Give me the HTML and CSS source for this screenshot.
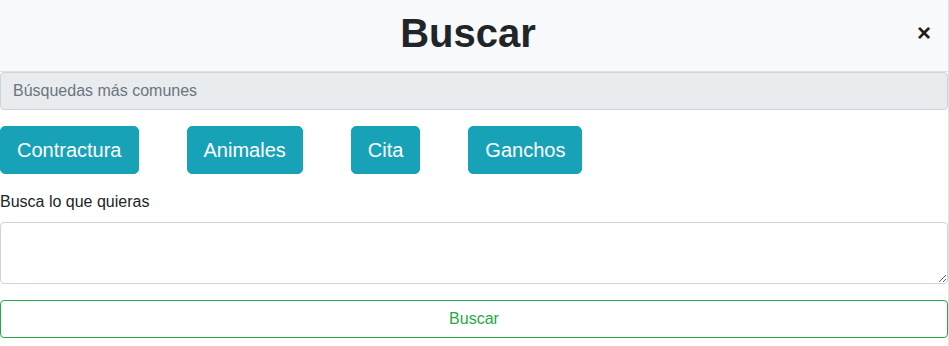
FILE: index.html
```html
<!DOCTYPE html>
<html lang="es">
<head>
    <meta charset="UTF-8">
    <meta name="viewport" content="width=device-width, initial-scale=1.0">
    <title>Buscar</title>
    <link rel="stylesheet" href="styles.css">
</head>
<body>
    <div class="modal">
        <header class="modal-header">
            <h1>Buscar</h1>
            <button type="button" class="close" aria-label="Cerrar">&times;</button>
        </header>

        <main class="modal-body">
            <div class="common-bar">Búsquedas más comunes</div>

            <div class="tags">
                <button type="button" class="tag">Contractura</button>
                <button type="button" class="tag">Animales</button>
                <button type="button" class="tag">Cita</button>
                <button type="button" class="tag">Ganchos</button>
            </div>

            <form class="search-form">
                <label for="query">Busca lo que quieras</label>
                <textarea id="query" rows="2"></textarea>
                <button type="submit" class="submit">Buscar</button>
            </form>
        </main>
    </div>
</body>
</html>
```

FILE: styles.css
```css
body {
    font-family: "Liberation Sans", Arial, sans-serif;
    color: #212529;
    margin: 0;
    padding: 0;
    background: #fff;
}

.modal {
    border-right: 1px solid #dee2e6;
    min-height: 100vh;
    box-sizing: border-box;
}

.modal-header {
    display: flex;
    align-items: center;
    box-sizing: border-box;
    height: 72px;
    padding-bottom: 6px;
    background-color: #f8f9fa;
    border-bottom: 1px solid #dee2e6;
}

.modal-header h1 {
    flex: 1;
    margin: 0;
    padding-right: 16px;
    text-align: center;
    font-size: 40px;
    font-weight: 700;
    line-height: 1.2;
    color: #212529;
}

.close {
    margin-left: -40px;
    margin-right: 12px;
    width: 24px;
    padding: 0;
    border: none;
    background: none;
    font-family: inherit;
    font-size: 24px;
    font-weight: 700;
    line-height: 1;
    color: #1e1e1e;
    cursor: pointer;
}

.common-bar {
    height: 38px;
    box-sizing: border-box;
    padding: 0 12px;
    display: flex;
    align-items: center;
    background-color: #e9ecef;
    border: 1px solid #ced4da;
    border-radius: 4px;
    color: #6c757d;
    font-size: 16px;
}

.tags {
    display: flex;
    gap: 48px;
    margin: 16px 0;
}

.tag {
    padding: 8px 16px;
    font-family: inherit;
    font-size: 20px;
    line-height: 1.5;
    color: #fff;
    background-color: #17a2b8;
    border: 1px solid #17a2b8;
    border-radius: 5px;
    cursor: pointer;
}

.search-form label {
    display: block;
    font-size: 16px;
    line-height: 24px;
    margin-bottom: 8px;
}

.search-form textarea {
    display: block;
    width: 100%;
    height: 62px;
    box-sizing: border-box;
    padding: 6px 12px;
    margin: 0 0 16px;
    font-family: inherit;
    font-size: 16px;
    border: 1px solid #ced4da;
    border-radius: 4px;
}

.submit {
    display: block;
    width: 100%;
    height: 38px;
    font-family: inherit;
    font-size: 16px;
    color: #28a745;
    background: #fff;
    border: 1px solid #28a745;
    border-radius: 4px;
    cursor: pointer;
}
```
